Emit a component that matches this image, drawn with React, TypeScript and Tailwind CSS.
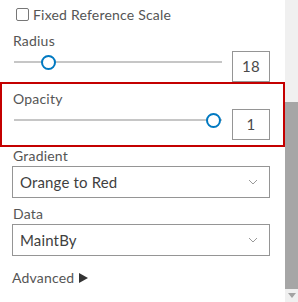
import React from 'react';

const font = { fontFamily: 'Lato, "Open Sans", sans-serif' };

const Slider: React.FC<{ pos: number }> = ({ pos }) => (
  <div className="relative flex-1 h-[15px] mt-[4px] ml-[2px]">
    <div className="absolute left-0 right-0 top-[6px] h-[2px] bg-[#c6c6c6]"></div>
    <div
      className="absolute top-0 w-[15px] h-[15px] rounded-full border-2 border-[#0079c1] bg-white"
      style={{ left: pos }}
    ></div>
  </div>
);

const NumBox: React.FC<{ value: string }> = ({ value }) => (
  <div className="w-[38px] h-[31px] ml-[10px] border border-[#959595] flex items-center justify-center text-[15px] text-[#4a4a4a]">
    {value}
  </div>
);

const Select: React.FC<{ value: string }> = ({ value }) => (
  <div className="h-[32px] border border-[#959595] flex items-center justify-between pl-[7px] pr-[11px] text-[15px] text-[#3f3f3f] tracking-[0.15px]">
    <span>{value}</span>
    <svg width="10" height="6" viewBox="0 0 10 6" fill="none">
      <path d="M1 1l4 4 4-4" stroke="#9a9a9a" strokeWidth="1" />
    </svg>
  </div>
);

export default function App() {
  return (
    <div className="w-[298px] h-[302px] flex bg-white overflow-hidden text-[#555] text-[14px] tracking-[0.2px]" style={font}>
      <div className="w-[285px] flex flex-col">
        <div className="flex items-center h-[17px] mt-[6px] pl-4 gap-[4px] leading-[17px]">
          <div className="w-[13px] h-[13px] rounded-[2px] border border-[#777]"></div>
          <span>Fixed Reference Scale</span>
        </div>

        <div className="px-3 mt-[9px] mr-[3px]">
          <div className="leading-[17px] h-[17px] mb-[2px] ml-[1px]">Radius</div>
          <div className="flex items-start">
            <Slider pos={27} />
            <NumBox value="18" />
          </div>
        </div>

        <div className="border-2 border-[#c40000] pl-[10px] pr-[13px] pt-[6px] pb-[5px]">
          <div className="leading-[17px] h-[17px] mb-[2px] ml-[1px]">Opacity</div>
          <div className="flex items-start">
            <Slider pos={192} />
            <NumBox value="1" />
          </div>
        </div>

        <div className="px-3 mr-[3px] flex flex-col">
          <div className="leading-[17px] h-[17px] mb-[2px] ml-[1px]">Gradient</div>
          <Select value="Orange to Red" />
          <div className="leading-[17px] h-[17px] mb-[2px] ml-[1px] mt-[7px]">Data</div>
          <Select value="MaintBy" />
          <div className="leading-[17px] h-[17px] mt-[13px] flex items-center gap-[5px]">
            <span>Advanced</span>
            <svg width="9" height="10" viewBox="0 0 9 10">
              <path d="M0 0L9 5L0 10z" fill="#333" />
            </svg>
          </div>
        </div>
      </div>

      <div className="w-[13px] h-full bg-[#f0f0f0] flex flex-col">
        <div className="h-[102px]"></div>
        <div className="flex-1 bg-[#a6a6a6]"></div>
        <div className="h-[13px] flex items-center justify-center">
          <svg width="8" height="5" viewBox="0 0 8 5">
            <path d="M0 0h8L4 5z" fill="#a3a3a3" />
          </svg>
        </div>
      </div>
    </div>
  );
}
